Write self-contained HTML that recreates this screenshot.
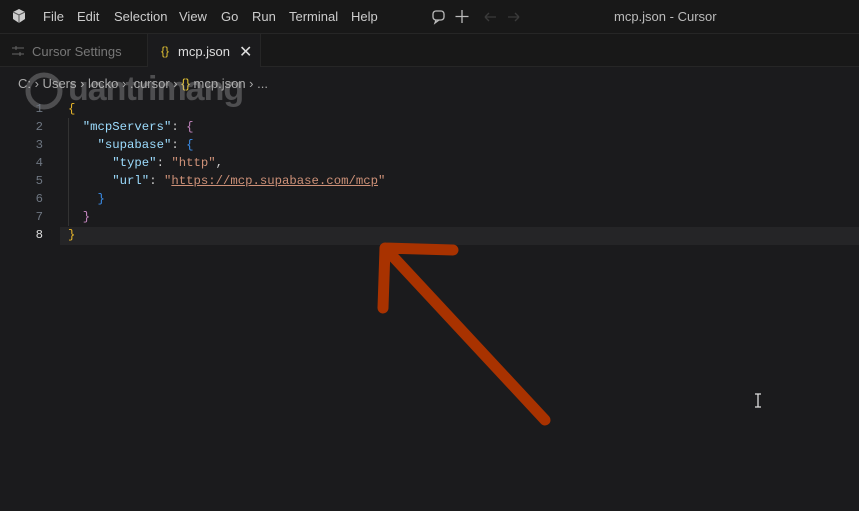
<!DOCTYPE html>
<html><head><style>
body{margin:0;width:859px;height:511px;overflow:hidden;background:#1b1b1d;font-family:"Liberation Sans",sans-serif;position:relative}
.t{position:absolute;top:0;left:0;width:859px;height:33px;background:#181818;border-bottom:1px solid #262626}
.menu{position:absolute;top:9px;font-size:13px;color:#cccccc}
.tabs{position:absolute;top:34px;left:0;width:859px;height:32px;background:#181818;border-bottom:1px solid #262626}
.tab2{position:absolute;left:147px;top:34px;width:112px;height:33px;background:#1b1b1d;border-left:1px solid #262626;border-right:1px solid #262626}
.code{position:absolute;left:0;font-family:"Liberation Mono",monospace;font-size:12.3px;white-space:pre;line-height:18px}
.ln{position:absolute;width:43px;text-align:right;color:#6e7681}
.s{color:#9cdcfe}.v{color:#ce9178}
</style></head><body>
<div class="t"></div>
<svg style="position:absolute;left:12px;top:9px" width="14" height="14"><path d="M1 3 L7 0 L13 3 L13 10 L7 14 L1 10Z" fill="#ccc"/><path d="M1 3 L7 6 L13 3 M7 6 L7 14" stroke="#555" fill="none"/></svg>
<span class="menu" style="left:43px">File</span><span class="menu" style="left:77px">Edit</span><span class="menu" style="left:114px">Selection</span><span class="menu" style="left:179px">View</span><span class="menu" style="left:221px">Go</span><span class="menu" style="left:252px">Run</span><span class="menu" style="left:289px">Terminal</span><span class="menu" style="left:351px">Help</span>
<svg style="position:absolute;left:432px;top:9px" width="90" height="16" fill="none" stroke="#bbb" stroke-width="1.3"><rect x="1" y="2" width="11" height="9" rx="3"/><path d="M4 11 L3 14 L7 11"/><path d="M30 1 V14 M23.5 7.5 H36.5"/><path d="M53 8 H64 M53 8 L57 4 M53 8 L57 12 M76 8 H87 M87 8 L83 4 M87 8 L83 12" stroke="#3a3a3a"/></svg>
<span class="menu" style="left:614px;color:#bbb">mcp.json - Cursor</span>
<div class="tabs"></div>
<div class="tab2"></div>
<svg style="position:absolute;left:12px;top:45px" width="12" height="12" stroke="#666" fill="none"><path d="M0 3H12M0 9H12M4 1V5M8 7V11"/></svg>
<span class="menu" style="left:32px;top:44px;color:#777">Cursor Settings</span>
<span class="menu" style="left:161px;top:44px;color:#e2c233;font-size:12px">{}</span>
<span class="menu" style="left:178px;top:44px;color:#ddd">mcp.json</span>
<span class="menu" style="left:239px;top:42px;color:#ddd;font-size:16px">✕</span>
<div class="menu" style="left:18px;top:76px;color:#aaa;font-size:13px">C: › Users › locko › .cursor › <span style="color:#e2c233">{}</span> mcp.json › ...</div>
<svg style="position:absolute;left:24px;top:70px" width="44" height="44" fill="none" stroke="rgba(200,200,200,.3)" stroke-width="5"><circle cx="20" cy="21" r="16"/></svg>
<div style="position:absolute;left:68px;top:70px;font-size:34px;font-weight:bold;color:rgba(200,200,200,.3);letter-spacing:-1px">uantrimang</div>
<div style="position:absolute;left:60px;top:227px;width:799px;height:18px;background:#252527"></div>
<div style="position:absolute;left:68px;top:118px;height:108px;border-left:1px solid #333"></div>
<div class="code" style="top:100px">
<div class="ln" style="top:0">1</div><div class="ln" style="top:18px">2</div><div class="ln" style="top:36px">3</div><div class="ln" style="top:54px">4</div><div class="ln" style="top:72px">5</div><div class="ln" style="top:90px">6</div><div class="ln" style="top:108px">7</div><div class="ln" style="top:126px;color:#ddd">8</div>
<div style="position:absolute;left:68px;top:0;color:#ccc"><span style="color:#e8b62a">{</span>
  <span class="s">"mcpServers"</span>: <span style="color:#c586c0">{</span>
    <span class="s">"supabase"</span>: <span style="color:#3b8eea">{</span>
      <span class="s">"type"</span>: <span class="v">"http"</span>,
      <span class="s">"url"</span>: <span class="v">"<span style="text-decoration:underline">https://mcp.supabase.com/mcp</span>"</span>
    <span style="color:#3b8eea">}</span>
  <span style="color:#c586c0">}</span>
<span style="color:#e8b62a">}</span></div></div>
<svg style="position:absolute;left:0;top:0" width="859" height="511"><path d="M453 250 L385 248 L383 308 M385 248 L545 420" stroke="#a83200" stroke-width="11" fill="none" stroke-linecap="round" stroke-linejoin="round"/><path d="M755 394H761M758 394V407M755 407H761" stroke="#ddd" stroke-width="1.3"/></svg>
</body></html>
